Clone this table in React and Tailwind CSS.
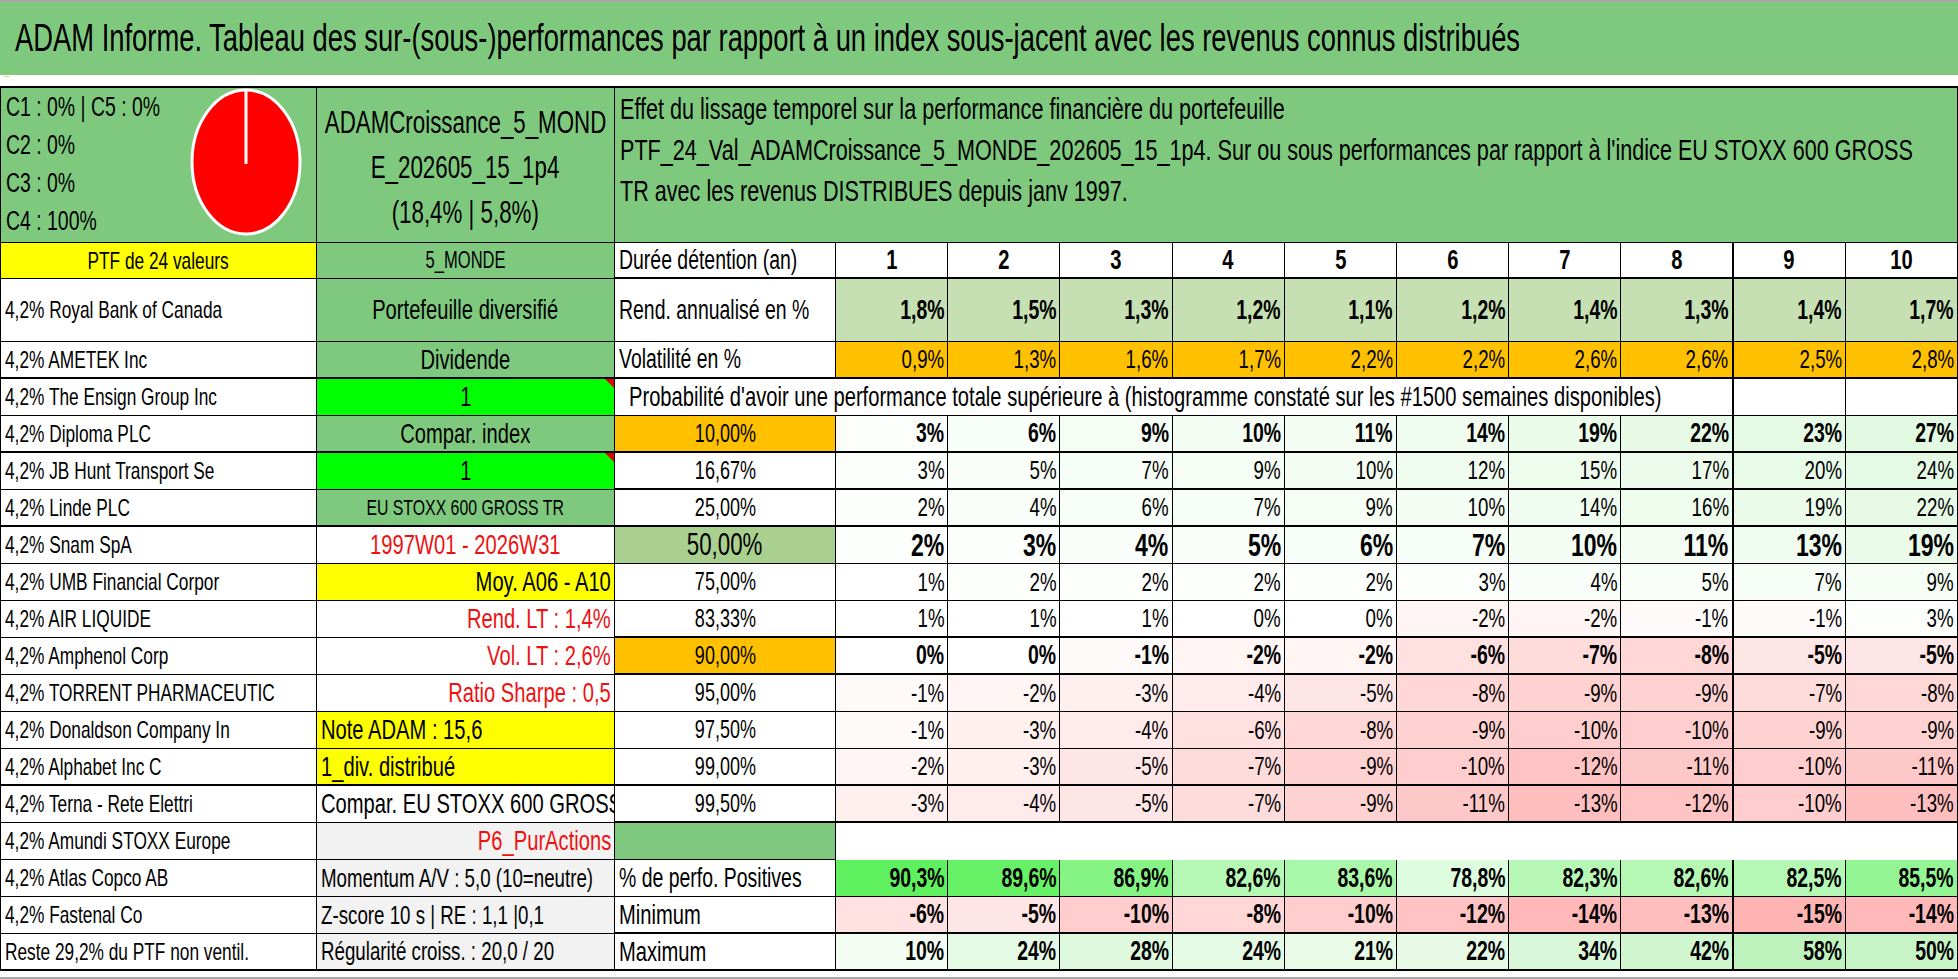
import React from 'react';

const FONT = "[font-family:'Liberation_Sans',Arial,sans-serif]";
const G = 'bg-[#7fc97f]';
const BASE = 'flex items-center overflow-hidden whitespace-nowrap border-black border-r';
const ORIG = { l: 'origin-left', c: 'origin-center', r: 'origin-right' };

function num(s) {
  return parseFloat(s.replace(',', '.').replace('%', ''));
}

function heat(s) {
  const v = num(s);
  if (v >= 0) {
    const t = Math.min(v / 70, 1);
    const r = Math.round(255 - 79 * t);
    const g = Math.round(255 - 15 * t);
    return `rgb(${r},${g},${r})`;
  }
  const t = Math.min(-v / 15, 1);
  const gb = Math.round(255 - 75 * t);
  return `rgb(255,${gb},${gb})`;
}

function posHeat(s) {
  const v = num(s);
  const t = Math.max(0, Math.min((v - 78.8) / (90.3 - 78.8), 1));
  const r = Math.round(222 - 127 * t);
  const g = Math.round(252 - 12 * t);
  return `rgb(${r},${g},${r})`;
}

function T({ o = 'l', children }) {
  return <span className={`inline-block shrink-0 scale-x-[0.72] ${ORIG[o]}`}>{children}</span>;
}

function Cell({ cls = '', a = 'l', style, children, extra }) {
  const j = a === 'c' ? 'justify-center' : a === 'r' ? 'justify-end pr-[3px]' : 'justify-start pl-[4px]';
  return (
    <div className={`${BASE} ${j} ${cls}`} style={style}>
      {children != null && <T o={a}>{children}</T>}
      {extra}
    </div>
  );
}

function Vals({ vals, bold, thick, size, bg, heatFn, center }) {
  return vals.map((v, i) => (
    <Cell
      key={i}
      a={center ? 'c' : 'r'}
      cls={`${i === 7 ? 'border-r-2' : ''} ${thick ? 'border-b-2' : 'border-b'} ${bold ? 'font-bold' : ''} ${size || (bold ? 'text-[27px]' : 'text-[26px]')} ${bg || ''}`}
      style={heatFn ? { backgroundColor: heatFn(v) } : undefined}
    >
      {v}
    </Cell>
  ));
}

function Tri() {
  return (
    <span className="absolute top-0 right-0 w-0 h-0 border-l-[9px] border-l-transparent border-t-[9px] border-t-[#e00000]" />
  );
}

function CellA({ children, thick }) {
  return (
    <Cell cls={`${thick ? 'border-b-2' : 'border-b'} bg-white text-[24px]`}>{children}</Cell>
  );
}

const RED = 'text-[#ee1111]';

const probRows = [
  {
    a: '4,2% Diploma PLC',
    b: <Cell a="c" cls={`border-b-2 ${G} text-[28px]`}>Compar. index</Cell>,
    c: '10,00%', cBg: 'bg-[#ffc000]', vals: ['3%', '6%', '9%', '10%', '11%', '14%', '19%', '22%', '23%', '27%'],
    bold: true, tl: true, tr: true,
  },
  {
    a: '4,2% JB Hunt Transport Se',
    b: <Cell a="c" cls="border-b relative bg-[#00ff00] text-[28px]" extra={<Tri />}>1</Cell>,
    c: '16,67%', vals: ['3%', '5%', '7%', '9%', '10%', '12%', '15%', '17%', '20%', '24%'],
    tl: false, tr: true,
  },
  {
    a: '4,2% Linde PLC',
    b: <Cell a="c" cls={`border-b-2 ${G} text-[22px]`}>EU STOXX 600 GROSS TR</Cell>,
    c: '25,00%', vals: ['2%', '4%', '6%', '7%', '9%', '10%', '14%', '16%', '19%', '22%'],
    tl: true, tr: true,
  },
  {
    a: '4,2% Snam SpA',
    b: <Cell a="c" cls={`border-b bg-white text-[28px] ${RED}`}>1997W01 - 2026W31</Cell>,
    c: '50,00%', cBg: 'bg-[#a9d08e]', cSize: 'text-[31px]', vals: ['2%', '3%', '4%', '5%', '6%', '7%', '10%', '11%', '13%', '19%'],
    bold: true, size: 'text-[32px]',
  },
  {
    a: '4,2% UMB Financial Corpor',
    b: <Cell a="r" cls="border-b bg-[#ffff00] text-[28px]">Moy. A06 - A10</Cell>,
    c: '75,00%', vals: ['1%', '2%', '2%', '2%', '2%', '3%', '4%', '5%', '7%', '9%'],
  },
  {
    a: '4,2% AIR LIQUIDE',
    b: <Cell a="r" cls={`border-b bg-white text-[28px] ${RED}`}>Rend. LT : 1,4%</Cell>,
    c: '83,33%', vals: ['1%', '1%', '1%', '0%', '0%', '-2%', '-2%', '-1%', '-1%', '3%'],
    tr: true,
  },
  {
    a: '4,2% Amphenol Corp',
    b: <Cell a="r" cls={`border-b bg-white text-[28px] ${RED}`}>Vol. LT : 2,6%</Cell>,
    c: '90,00%', cBg: 'bg-[#ffc000]', vals: ['0%', '0%', '-1%', '-2%', '-2%', '-6%', '-7%', '-8%', '-5%', '-5%'],
    bold: true, tr: true,
  },
  {
    a: '4,2% TORRENT PHARMACEUTIC',
    b: <Cell a="r" cls={`border-b bg-white text-[28px] ${RED}`}>Ratio Sharpe : 0,5</Cell>,
    c: '95,00%', vals: ['-1%', '-2%', '-3%', '-4%', '-5%', '-8%', '-9%', '-9%', '-7%', '-8%'],
  },
  {
    a: '4,2% Donaldson Company In',
    b: <Cell a="l" cls="border-b bg-[#ffff00] text-[28px]">Note ADAM : 15,6</Cell>,
    c: '97,50%', vals: ['-1%', '-3%', '-4%', '-6%', '-8%', '-9%', '-10%', '-10%', '-9%', '-9%'],
  },
  {
    a: '4,2% Alphabet Inc C',
    b: <Cell a="l" cls="border-b-2 bg-[#ffff00] text-[28px]">1_div. distribué</Cell>,
    c: '99,00%', vals: ['-2%', '-3%', '-5%', '-7%', '-9%', '-10%', '-12%', '-11%', '-10%', '-11%'],
    tl: true, tr: true,
  },
  {
    a: '4,2% Terna - Rete Elettri',
    b: <Cell a="l" cls="border-b bg-white text-[28px]">Compar. EU STOXX 600 GROSS TR</Cell>,
    c: '99,50%', vals: ['-3%', '-4%', '-5%', '-7%', '-9%', '-11%', '-13%', '-12%', '-10%', '-13%'],
    tr: true,
  },
];

export default function App() {
  return (
    <div className={`w-[1958px] h-[979px] overflow-hidden bg-white text-black ${FONT}`}>
      <div className={`h-[75px] border-t-2 border-[#a6a6a6] ${G} flex items-center pl-[15px] text-[38px] whitespace-nowrap overflow-hidden`}>
        <T o="l">ADAM Informe. Tableau des sur-(sous-)performances par rapport à un index sous-jacent avec les revenus connus distribués</T>
      </div>
      <div className="h-[11px] bg-white pl-[4px] text-[8px] leading-none text-[#e0a020]">ˆˆ</div>
      <div className="grid grid-cols-[316px_298px_221px_repeat(10,minmax(0,1fr))] grid-rows-[155px_36px_63px_37px_repeat(16,37px)] border-t-2 border-l border-black">
        {/* header block */}
        <div className={`${G} border-r border-b border-black flex overflow-hidden`}>
          <div className="w-[178px] shrink-0 flex flex-col items-start pl-[5px] text-[27px] leading-[38px] whitespace-nowrap">
            <T o="l">C1 : 0% | C5 : 0%</T>
            <T o="l">C2 : 0%</T>
            <T o="l">C3 : 0%</T>
            <T o="l">C4 : 100%</T>
          </div>
          <svg className="ml-auto mr-[14px] shrink-0 self-start" width="112" height="148" viewBox="0 0 112 148">
            <ellipse cx="56" cy="74" rx="54" ry="72" fill="#ff0000" stroke="#ffffff" strokeWidth="3" />
            <line x1="56" y1="2" x2="56" y2="76" stroke="#ffffff" strokeWidth="3" />
          </svg>
        </div>
        <div className={`${G} border-r border-b border-black flex flex-col items-center pt-[12px] text-[31px] leading-[45px] whitespace-nowrap overflow-hidden`}>
          <T o="c">ADAMCroissance_5_MOND</T>
          <T o="c">E_202605_15_1p4</T>
          <T o="c">(18,4% | 5,8%)</T>
        </div>
        <div className={`${G} col-span-11 border-r border-b border-black flex flex-col items-start pl-[5px] text-[30px] leading-[41px] whitespace-nowrap overflow-hidden`}>
          <T o="l">Effet du lissage temporel sur la performance financière du portefeuille</T>
          <T o="l">PTF_24_Val_ADAMCroissance_5_MONDE_202605_15_1p4. Sur ou sous performances par rapport à l'indice EU STOXX 600 GROSS</T>
          <T o="l">TR avec les revenus DISTRIBUES depuis janv 1997.</T>
        </div>

        {/* PTF row */}
        <Cell a="c" cls="border-b bg-[#ffff00] text-[24px]">PTF de 24 valeurs</Cell>
        <Cell a="c" cls={`border-b ${G} text-[23px]`}>5_MONDE</Cell>
        <Cell a="l" cls="border-b-2 bg-white text-[27px]">Durée détention (an)</Cell>
        <Vals vals={['1', '2', '3', '4', '5', '6', '7', '8', '9', '10']} bold thick center size="text-[28px]" bg="bg-white" />

        {/* Royal */}
        <CellA>4,2% Royal Bank of Canada</CellA>
        <Cell a="c" cls={`border-b ${G} text-[28px]`}>Portefeuille diversifié</Cell>
        <Cell a="l" cls="border-b bg-white text-[27px]">Rend. annualisé en %</Cell>
        <Vals vals={['1,8%', '1,5%', '1,3%', '1,2%', '1,1%', '1,2%', '1,4%', '1,3%', '1,4%', '1,7%']} bold bg="bg-[#c6e0b4]" />

        {/* AMETEK */}
        <CellA thick>4,2% AMETEK Inc</CellA>
        <Cell a="c" cls={`border-b-2 ${G} text-[28px]`}>Dividende</Cell>
        <Cell a="l" cls="border-b-2 bg-white text-[27px]">Volatilité en %</Cell>
        <Vals vals={['0,9%', '1,3%', '1,6%', '1,7%', '2,2%', '2,2%', '2,6%', '2,6%', '2,5%', '2,8%']} thick bg="bg-[#ffc000]" />

        {/* Ensign */}
        <CellA>4,2% The Ensign Group Inc</CellA>
        <Cell a="c" cls="border-b relative bg-[#00ff00] text-[28px]" extra={<Tri />}>1</Cell>
        <div className={`${BASE} col-span-9 border-b border-r-2 bg-white pl-[14px] text-[28px]`}>
          <T o="l">Probabilité d'avoir une performance totale supérieure à (histogramme constaté sur les #1500 semaines disponibles)</T>
        </div>
        <div className={`${BASE} border-b bg-white`} />
        <div className={`${BASE} border-b bg-white`} />

        {probRows.map((r, idx) => (
          <React.Fragment key={idx}>
            <CellA thick={r.tl}>{r.a}</CellA>
            {r.b}
            <Cell a="c" cls={`${r.tr ? 'border-b-2' : 'border-b'} ${r.cSize || 'text-[25px]'} ${r.cBg || 'bg-white'}`}>{r.c}</Cell>
            <Vals vals={r.vals} bold={r.bold} thick={r.tr} size={r.size} heatFn={heat} />
          </React.Fragment>
        ))}

        {/* Amundi */}
        <CellA>4,2% Amundi STOXX Europe</CellA>
        <Cell a="r" cls={`border-b bg-[#f2f2f2] text-[28px] ${RED}`}>P6_PurActions</Cell>
        <div className={`${BASE} border-b ${G}`} />
        <div className={`${BASE} col-span-10 bg-white`} />

        {/* Atlas */}
        <CellA>4,2% Atlas Copco AB</CellA>
        <Cell a="l" cls="border-b bg-[#f2f2f2] text-[26px]">Momentum A/V : 5,0 (10=neutre)</Cell>
        <Cell a="l" cls="border-b bg-white text-[27px]">% de perfo. Positives</Cell>
        <Vals vals={['90,3%', '89,6%', '86,9%', '82,6%', '83,6%', '78,8%', '82,3%', '82,6%', '82,5%', '85,5%']} bold heatFn={posHeat} />

        {/* Fastenal */}
        <CellA>4,2% Fastenal Co</CellA>
        <Cell a="l" cls="border-b bg-[#f2f2f2] text-[26px]">Z-score 10 s | RE : 1,1 |0,1</Cell>
        <Cell a="l" cls="border-b-2 bg-white text-[28px]">Minimum</Cell>
        <Vals vals={['-6%', '-5%', '-10%', '-8%', '-10%', '-12%', '-14%', '-13%', '-15%', '-14%']} bold thick heatFn={heat} />

        {/* Reste */}
        <CellA thick>Reste 29,2% du PTF non ventil.</CellA>
        <Cell a="l" cls="border-b-2 bg-[#f2f2f2] text-[26px]">Régularité croiss. : 20,0 / 20</Cell>
        <Cell a="l" cls="border-b-2 bg-white text-[28px]">Maximum</Cell>
        <Vals vals={['10%', '24%', '28%', '24%', '21%', '22%', '34%', '42%', '58%', '50%']} bold thick heatFn={heat} />
      </div>
      <div className="h-[8px] border-b-2 border-[#a6a6a6]" />
    </div>
  );
}
